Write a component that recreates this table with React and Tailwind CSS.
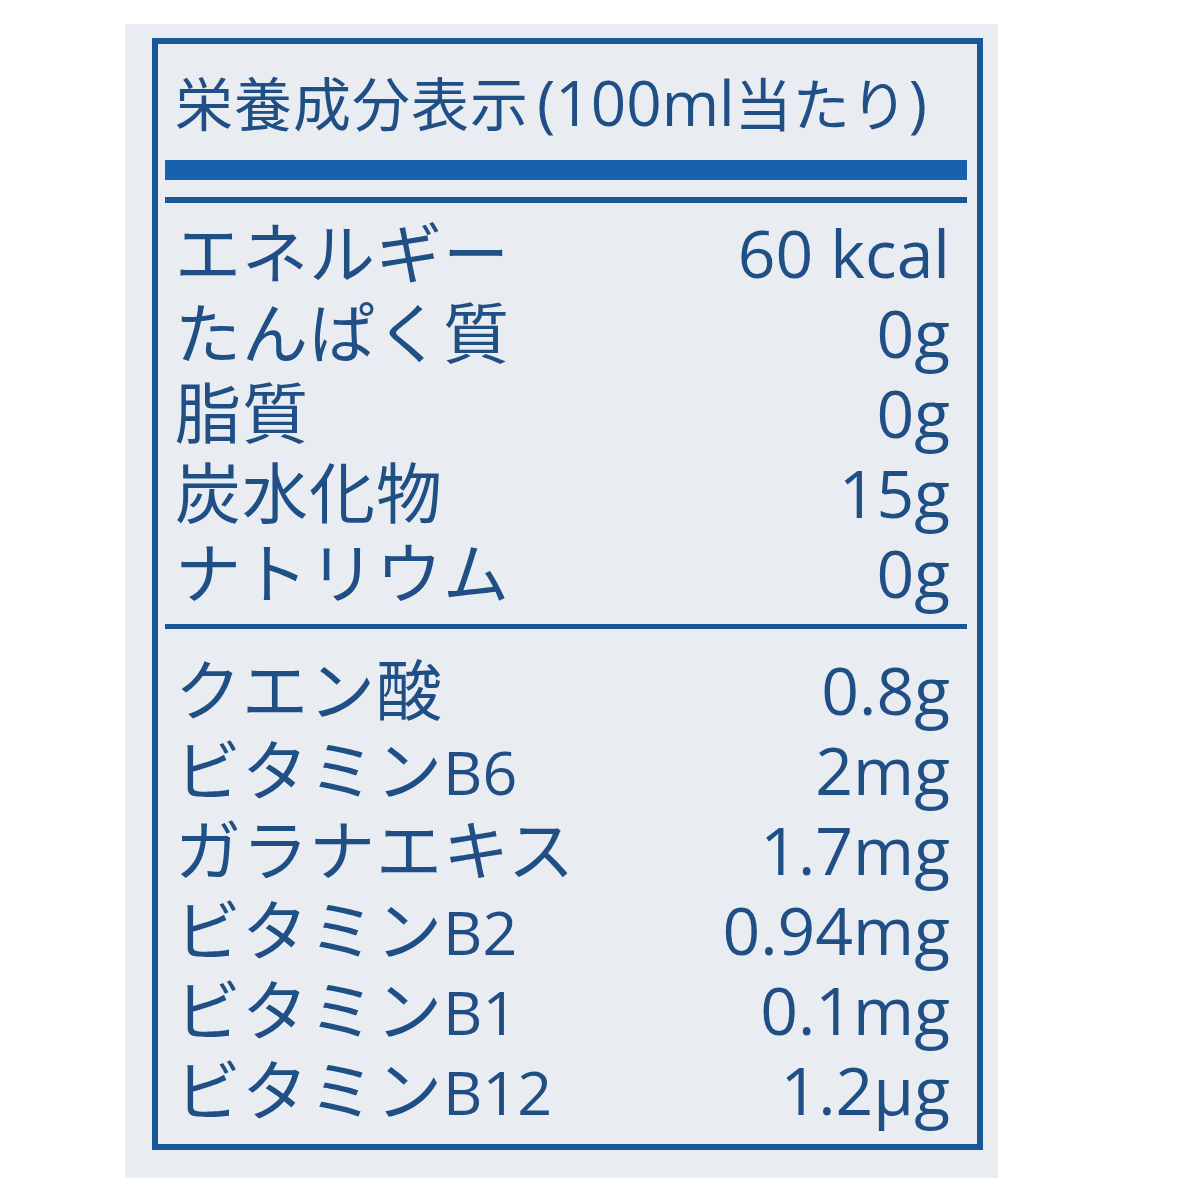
const group1 = [
  ["エネルギー", "", "60 kcal"],
  ["たんぱく質", "", "0g"],
  ["脂質", "", "0g"],
  ["炭水化物", "", "15g"],
  ["ナトリウム", "", "0g"],
];

const group2 = [
  ["クエン酸", "", "0.8g"],
  ["ビタミン", "B6", "2mg"],
  ["ガラナエキス", "", "1.7mg"],
  ["ビタミン", "B2", "0.94mg"],
  ["ビタミン", "B1", "0.1mg"],
  ["ビタミン", "B12", "1.2μg"],
];

const Row = ({ label, suffix, value }) => (
  <div className="flex h-[80px] items-baseline justify-between pl-[17px] pr-[27px] leading-[80px]">
    <div className="flex items-baseline">
      <span className="text-[66px] tracking-[1px] font-['Noto_Sans_CJK_JP',sans-serif]">
        {label}
      </span>
      {suffix && (
        <span className="text-[61px] font-['Open_Sans',sans-serif]">{suffix}</span>
      )}
    </div>
    <span className="text-[66px] font-['Open_Sans',sans-serif]">{value}</span>
  </div>
);

export default function App() {
  return (
    <div className="h-[1200px] w-full bg-white pl-[125px] pt-[24px]">
      <div className="h-[1154px] w-[873px] bg-[#e9edf2] pl-[27px] pt-[14px]">
        <div className="h-[1112px] w-[831px] border-[6px] border-[#1a5796] text-[#1f4f85]">
          <div className="h-[116px] pl-[17px] pt-[25px] leading-[64px]">
            <span className="text-[58px] tracking-[1px] font-['Noto_Sans_CJK_JP',sans-serif]">
              栄養成分表示
            </span>
            <span className="ml-[8px] text-[62px] font-['Open_Sans',sans-serif]">(100ml</span>
            <span className="text-[57px] tracking-[1px] font-['Noto_Sans_CJK_JP',sans-serif]">
              当たり
            </span>
            <span className="text-[62px] font-['Open_Sans',sans-serif]">)</span>
          </div>
          <div className="mx-[7px] mr-[10px] h-[20px] bg-[#1761ae]" />
          <div className="mx-[7px] mr-[10px] mt-[17px] h-[6px] bg-[#1a5796]" />
          <div className="mt-[6px]">
            {group1.map(([l, s, v], i) => (
              <Row key={i} label={l} suffix={s} value={v} />
            ))}
          </div>
          <div className="mx-[7px] mr-[10px] mt-[15px] h-[5px] bg-[#1a5796]" />
          <div className="mt-[17px]">
            {group2.map(([l, s, v], i) => (
              <Row key={i} label={l} suffix={s} value={v} />
            ))}
          </div>
        </div>
      </div>
    </div>
  );
}
